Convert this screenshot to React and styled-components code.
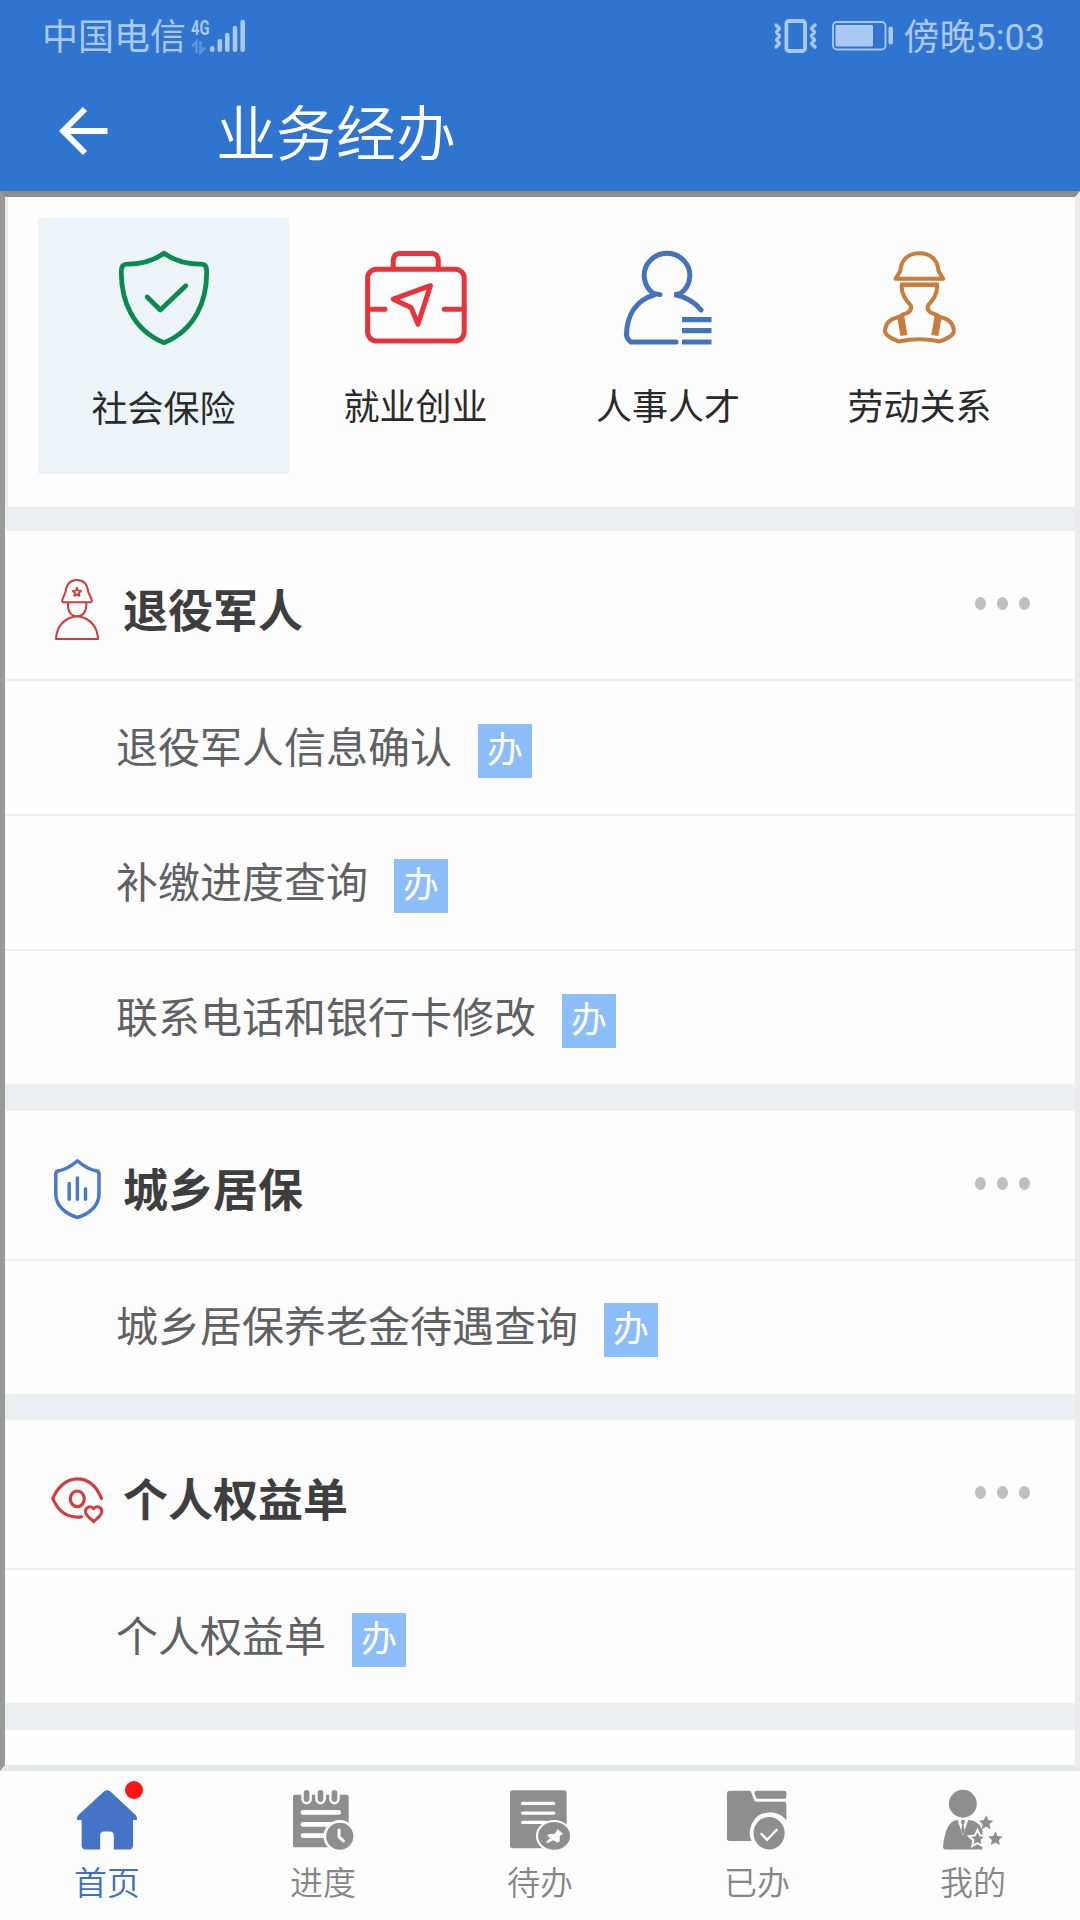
import React from 'react';
import styled, { createGlobalStyle } from 'styled-components';

const GlobalStyle = createGlobalStyle`
    * {
        box-sizing: border-box;
    }
    body {
        margin: 0;
        background-color: #fdfdfd;
        font-family: Roboto, "Noto Sans CJK SC", sans-serif;
    }
    p, h1, h2 {
        margin: 0;
        font-weight: inherit;
    }
    svg {
        display: block;
        overflow: visible;
    }
`

const star = (cx, cy, r) => {
    const points = [];
    for (let i = 0; i < 10; i++) {
        const radius = i % 2 ? r * 0.48 : r;
        const angle = -Math.PI / 2 + i * Math.PI / 5;
        points.push(`${(cx + radius * Math.cos(angle)).toFixed(1)},${(cy + radius * Math.sin(angle)).toFixed(1)}`);
    }
    return points.join(' ');
}

//status bar icons
const Signal = () => (
    <svg width="36" height="34" viewBox="0 0 36 34" stroke="#a9c9f3" strokeWidth="4.6" strokeLinecap="round">
        <path d="M2.3 29.2V30.7M9.8 22.3V30.7M17.3 16V30.7M25 9V30.7M32.7 3V30.7" />
    </svg>
)

const DataArrows = () => (
    <svg width="15" height="12" viewBox="0 0 15 12" fill="none" stroke="#5b93dd" strokeWidth="2.8">
        <path d="M1 5.5L5.5 1V12M9.5 0V11L14 6.5" />
    </svg>
)

const Vibrate = () => (
    <svg width="43" height="34" viewBox="0 0 43 34" fill="none" stroke="#a9c9f3" strokeLinecap="round" strokeLinejoin="round">
        <rect x="12.4" y="2" width="18.6" height="30" rx="2.5" strokeWidth="3.8" />
        <path d="M2 6L5.5 9.5L2.5 13L5.5 17L2.5 21L5.5 24.5L2 28M41 6L37.5 9.5L40.5 13L37.5 17L40.5 21L37.5 24.5L41 28" strokeWidth="3.4" />
    </svg>
)

const Battery = () => (
    <svg width="61" height="30" viewBox="0 0 61 30">
        <rect x="1" y="1" width="52.5" height="27.5" rx="4" fill="none" stroke="#a9c9f3" strokeWidth="1.8" />
        <rect x="3.5" y="4" width="37.5" height="21.5" rx="1" fill="#a9c9f3" />
        <rect x="56.5" y="5.5" width="4.5" height="18" rx="2" fill="#a9c9f3" />
    </svg>
)

const BackArrow = () => (
    <svg width="49" height="48" viewBox="0 0 49 48" fill="none" stroke="#fff" strokeWidth="6">
        <path d="M48.500 24H5M26 2L4.200 24L26 46" />
    </svg>
)

//category icons
const ShieldCheck = () => (
    <svg width="90" height="94" viewBox="0 0 90 94" fill="none" stroke="#0b8a50" strokeWidth="4.8" strokeLinecap="round" strokeLinejoin="round">
        <path d="M45 2.300C35 9.500 22 13.200 8 13.200Q2.300 13.200 2.300 20C2 50 14 79 45 91.700C76 79 88 50 87.700 20Q87.700 13.200 82 13.200C68 13.200 55 9.500 45 2.300Z" />
        <path d="M28.200 46L41.300 59L66.800 34.700" />
    </svg>
)

const Briefcase = () => (
    <svg width="102" height="94" viewBox="0 0 102 94" fill="none" stroke="#e7333a" strokeWidth="5" strokeLinecap="round" strokeLinejoin="round">
        <rect x="2.6" y="18.2" width="96.6" height="71.8" rx="9" />
        <path d="M28.200 18V10Q28.200 2.600 35.500 2.600H66Q73.300 2.600 73.300 10V18M3 58.300H20M79.200 58.300H99" />
        <path d="M65.400 34.700L28.200 48.200L46 56.500L53 73.300Z" />
    </svg>
)

const PersonList = () => (
    <svg width="88" height="94" viewBox="0 0 88 94" fill="none" stroke="#4672b9" strokeWidth="5">
        <path d="M36 43.600L29.500 42.500A22.800 22.300 0 1 1 56.500 42.500L50.500 43.600C62 46 71 51 77 59M30 44C13 49 3 63 2.400 84Q3 88 7 91H52" strokeLinecap="round" />
        <path d="M58 68.700H87.500M58 79.700H87.500M58 91H87.500" strokeWidth="5.2" />
    </svg>
)

const Worker = () => (
    <svg width="73" height="94" viewBox="0 0 73 94" fill="none" stroke="#c97d3d" strokeWidth="4" strokeLinejoin="round">
        <path d="M12.500 27.700L17.300 20C18 9 25 2.300 36.400 2.300C47.800 2.300 54.800 9 55.500 20L60.300 27.700Z" />
        <path d="M17 33.700H55.800" strokeWidth="4.4" />
        <path d="M18.500 34C18.500 44 23 49 27.800 54.500Q29.500 61 20 63.500L16 66C6 68 2 74 2 81C4 86 10 88 16 90.500Q36.400 86 56.800 90.500C63 88 69 86 70.800 81C70.800 74 67 68 57 66L52.800 63.500Q43 61 45 54.500C49.800 49 54.300 44 54.300 34" />
        <path d="M17.500 64.500L21 84.500M55.300 64.500L51.800 84.500" strokeWidth="7.2" />
    </svg>
)

//section icons
const Soldier = () => (
    <svg width="44" height="61" viewBox="0 0 44 61" fill="none" stroke="#d03a3a" strokeWidth="2" strokeLinejoin="round">
        <path d="M8.500 23.300Q6.500 23 7.500 20.500L10.500 13C11.500 5 15 1 21.900 1C28.800 1 32.300 5 33.300 13L36.700 20.500Q37.500 23 35.500 23.300Z" />
        <polygon points={star(21.9, 13.3, 4.4)} strokeWidth="1.8" />
        <path d="M13 23.500C12.500 32 15.500 37.300 22 37.300C28.500 37.300 31.700 32 31.300 23.500M14.500 39C6 43 1.500 50 1 60H43C42.500 50 38 43 29.500 39Q22 36 14.500 39Z" />
    </svg>
)

const ShieldBars = () => (
    <svg width="47" height="61" viewBox="0 0 47 61" fill="none" stroke="#457bc8" strokeWidth="3.5" strokeLinecap="round" strokeLinejoin="round">
        <path d="M23.400 1.800C17.500 7 11.500 11 4 12Q1.800 12.500 1.800 15V35C1.800 47 12 55 23.400 58.500C34.800 55 45 47 45 35V15Q45 12.500 42.800 12C35.300 11 29.300 7 23.400 1.800Z" />
        <path d="M15.200 24.500V40.300M23.400 19V40.300M31.500 30V40.300" />
    </svg>
)

const EyeHeart = () => (
    <svg width="53" height="51" viewBox="0 -4 53 51" fill="none" stroke="#d23c3c" strokeWidth="3.2" strokeLinecap="round" strokeLinejoin="round">
        <path d="M50.500 21.500C45.500 9 37 1.800 26.300 1.800C15 1.800 6.500 10.500 1.800 21.500C7 34 16 41.500 30.500 39.800" />
        <ellipse cx="26.3" cy="21.8" rx="7" ry="7.8" />
        <path d="M42.600 31.800C39.500 28 34.500 30 34.500 34.500C34.500 38.500 39 41 42.600 44.700C46.200 41 50.800 38.500 50.800 34.500C50.800 30 45.700 28 42.600 31.800Z" strokeWidth="3" />
    </svg>
)

//tab icons
const Home = () => (
    <svg width="60" height="60" viewBox="0 0 181 180" fill="#4573c5">
        <path d="M82 3Q91 -3 100 3L176 74Q184 84 180 90H169V168Q168 179 157 179H111V136Q110 125 100 125H81Q71 125 70 136V179H26Q15 179 14 168V90H1Q-3 84 5 74Z" />
    </svg>
)

const Progress = () => (
    <svg width="60" height="60" viewBox="0 0 181 180" fill="none" strokeLinecap="round">
        <rect x="0" y="14" width="168" height="158" rx="6" fill="#8e8e8e" />
        <path d="M41 8V27M83 8V27M125 8V27" stroke="#fdfdfd" strokeWidth="32" />
        <path d="M41 8V27M83 8V27M125 8V27" stroke="#8e8e8e" strokeWidth="17" />
        <path d="M30 67H138M30 103H120M30 137H100" stroke="#fdfdfd" strokeWidth="14" />
        <circle cx="141" cy="139" r="49" fill="#fdfdfd" />
        <circle cx="141" cy="139" r="41" fill="#8e8e8e" />
        <path d="M139 120V141L152 153" stroke="#fdfdfd" strokeWidth="9" strokeLinejoin="round" />
    </svg>
)

const Pending = () => (
    <svg width="60" height="60" viewBox="0 0 181 180" fill="none" strokeLinecap="round">
        <rect x="0" y="0" width="171" height="175" rx="7" fill="#8e8e8e" />
        <path d="M38 40H132M38 69H132M38 97H110" stroke="#fdfdfd" strokeWidth="10" />
        <ellipse cx="133" cy="138" rx="55" ry="48" fill="#fdfdfd" />
        <ellipse cx="133" cy="138" rx="48" ry="42" fill="#8e8e8e" />
        <path d="M142 117L160 131L154 136L150 138L150 154L143 159L131 151L112 160L109 156L121 144L112 137L118 132H133L140 125Z" fill="#fdfdfd" />
    </svg>
)

const Done = () => (
    <svg width="60" height="60" viewBox="0 0 181 180" fill="none">
        <path d="M8 2H66Q72 2 74 8L82 29Q84 34 90 34H172Q179 34 179 41V153H8Q0 153 0 146V9Q1 2 8 2Z" fill="#8e8e8e" />
        <path d="M76 0L87 30H181" stroke="#fdfdfd" strokeWidth="8" />
        <path d="M90 2H172Q179 2 179 9V19Q179 26 172 26H94Q89 26 87 21L83 9Q82 2 90 2Z" fill="#8e8e8e" />
        <path d="M127 67A60 62 0 0 0 78 162H184V98A62 62 0 0 0 127 67Z" fill="#fdfdfd" />
        <ellipse cx="127" cy="130" rx="47" ry="49" fill="#8e8e8e" />
        <path d="M102 130L121 150L152 117" stroke="#fdfdfd" strokeWidth="7" />
    </svg>
)

const Mine = () => (
    <svg width="60" height="60" viewBox="0 0 181 180" fill="#8e8e8e">
        <circle cx="60" cy="41" r="42" />
        <path d="M44 90C20 90 5 120 0 170Q0 179 8 179H119V120C110 100 95 90 76 90L60 138Z" />
        <path d="M56 90H64L66 97L62 104L65 122L60 135L55 122L58 104L54 97Z" />
        <polygon points={star(104, 147, 27)} stroke="#fdfdfd" strokeWidth="6" />
        <polygon points={star(130, 99, 23)} />
        <polygon points={star(158, 147, 23)} />
    </svg>
)

const categories = [
    { name: '社会保险', Icon: ShieldCheck, active: true },
    { name: '就业创业', Icon: Briefcase },
    { name: '人事人才', Icon: PersonList },
    { name: '劳动关系', Icon: Worker },
]

const sections = [
    { name: '退役军人', Icon: Soldier, items: ['退役军人信息确认', '补缴进度查询', '联系电话和银行卡修改'] },
    { name: '城乡居保', Icon: ShieldBars, items: ['城乡居保养老金待遇查询'] },
    { name: '个人权益单', Icon: EyeHeart, items: ['个人权益单'] },
]

const tabs = [
    { name: '首页', Icon: Home, active: true, unread: true },
    { name: '进度', Icon: Progress },
    { name: '待办', Icon: Pending },
    { name: '已办', Icon: Done },
    { name: '我的', Icon: Mine },
]

const App = () => {
    return (
        <Screen>
            <GlobalStyle />
            <Header>
                <StatusBar>
                    <StatusGroup>
                        <StatusText>中国电信</StatusText>
                        <Network>
                            <NetworkType>4G</NetworkType>
                            <DataArrows />
                        </Network>
                        <Signal />
                    </StatusGroup>
                    <StatusGroup>
                        <Vibrate />
                        <BatteryBox><Battery /></BatteryBox>
                        <StatusText>傍晚5:03</StatusText>
                    </StatusGroup>
                </StatusBar>
                <TitleBar>
                    <BackArrow />
                    <Title>业务经办</Title>
                </TitleBar>
            </Header>
            <Frame>
                <Categories>
                    {categories.map(({name, Icon, active}) => (
                        <Category key={name} $active={active}>
                            <CategoryIcon><Icon /></CategoryIcon>
                            <p>{name}</p>
                        </Category>
                    ))}
                </Categories>
                {sections.map(({name, Icon, items}) => (
                    <Section key={name}>
                        <SectionHeader>
                            <SectionIcon><Icon /></SectionIcon>
                            <SectionTitle>{name}</SectionTitle>
                            <More><i /><i /><i /></More>
                        </SectionHeader>
                        {items.map(item => (
                            <Item key={item}>
                                <p>{item}</p>
                                <Badge>办</Badge>
                            </Item>
                        ))}
                    </Section>
                ))}
                <NextSection />
            </Frame>
            <TabBar>
                {tabs.map(({name, Icon, active, unread}) => (
                    <Tab key={name} $active={active}>
                        <Icon />
                        {unread && <Unread />}
                        <p>{name}</p>
                    </Tab>
                ))}
            </TabBar>
        </Screen>
    );
}

export default App;

const Screen = styled.div`
    display: flex;
    flex-direction: column;
    width: 1080px;
    height: 1920px;
    overflow: hidden;
`

const Header = styled.header`
    height: 191px;
    background-color: #2f74cf;
`

const StatusBar = styled.div`
    display: flex;
    justify-content: space-between;
    height: 72px;
    padding: 0 35px 0 42px;
`

const StatusGroup = styled.div`
    display: flex;
    align-items: center;
`

const StatusText = styled.p`
    padding-top: 4px;
    font-size: 36px;
    font-weight: 400;
    line-height: 68px;
    color: #a9c9f3;
`

const Network = styled.div`
    display: flex;
    flex-direction: column;
    align-items: flex-start;
    gap: 5px;
    width: 19px;
    margin-left: 5px;
`

const NetworkType = styled.span`
    font-size: 21px;
    font-weight: 700;
    line-height: 16px;
    color: #a9c9f3;
    transform: scaleX(0.7);
    transform-origin: left;
`

const BatteryBox = styled.div`
    margin: 0 11px 0 15px;
`

const TitleBar = styled.div`
    display: flex;
    align-items: center;
    height: 118px;
    padding-left: 59px;
`

const Title = styled.h1`
    margin-left: 108px;
    padding-top: 10px;
    font-size: 60px;
    font-weight: 350;
    line-height: 90px;
    color: #fff;
`

const Frame = styled.main`
    height: 1580px;
    border-style: solid;
    border-width: 6px 5px 6px 5px;
    border-color: #8e8e8e #ebebeb #e4e5e6 #999;
    background-color: #edeef1;
    overflow: hidden;
`

const Categories = styled.div`
    display: grid;
    grid-template-columns: 251px 253px 252px 251px;
    height: 310px;
    margin-bottom: 24px;
    padding: 21px 0 0 30px;
    border-left: 3px solid #ededed;
    background-color: #fdfdfd;
`

const Category = styled.div`
    display: flex;
    flex-direction: column;
    align-items: center;
    height: 256px;
    padding-top: 33px;
    background-color: ${props => props.$active ? '#edf4f7' : 'transparent'};
    font-size: 36px;
    line-height: 54px;
    color: #2a2a2a;

p {
    margin-top: ${props => props.$active ? '38px' : '36px'};
}
`

const CategoryIcon = styled.div`
    height: 94px;
`

const Section = styled.section`
    margin-bottom: 24.5px;
    background-color: #fdfdfd;
`

const SectionHeader = styled.div`
    display: flex;
    align-items: center;
    height: 150px;
    padding: 9px 45px 0 45px;
    border-bottom: 2px solid #eeeff0;
`

const SectionIcon = styled.div`
    display: flex;
    justify-content: center;
    width: 54px;
`

const SectionTitle = styled.h2`
    flex: 1;
    margin-left: 19px;
    padding-top: 6px;
    font-size: 45px;
    font-weight: 700;
    line-height: 66px;
    color: #3d3f3f;
`

const More = styled.div`
    display: flex;
    gap: 11px;
    margin-top: -12px;

i {
    width: 11px;
    height: 13px;
    border-radius: 50%;
    background-color: #bfbfbf;
}
`

const Item = styled.div`
    display: flex;
    align-items: center;
    height: 135px;
    padding-left: 111px;
    border-bottom: 2px solid #eeeff0;
    font-size: 42px;
    line-height: 62px;
    color: #5f6163;

p {
    padding-top: 2px;
}
`

const Badge = styled.span`
    width: 54px;
    height: 54px;
    margin: 6px 0 0 26px;
    background-color: #8bbdf8;
    font-size: 36px;
    line-height: 54px;
    text-align: center;
    color: #fff;
`

const NextSection = styled.div`
    height: 60px;
    background-color: #fdfdfd;
`

const TabBar = styled.nav`
    display: grid;
    grid-template-columns: 214px 218px 216px 218px 214px;
    height: 149px;
    background-color: #fdfdfd;
`

const Tab = styled.div`
    position: relative;
    display: flex;
    flex-direction: column;
    align-items: center;
    padding-top: 19px;
    font-size: 33px;
    font-weight: 350;
    line-height: 48px;
    color: ${props => props.$active ? '#3f6fbe' : '#868686'};

p {
    margin-top: 10px;
}
`

const Unread = styled.span`
    position: absolute;
    top: 10px;
    left: 125px;
    width: 18px;
    height: 18px;
    border-radius: 50%;
    background-color: #fb1414;
`
